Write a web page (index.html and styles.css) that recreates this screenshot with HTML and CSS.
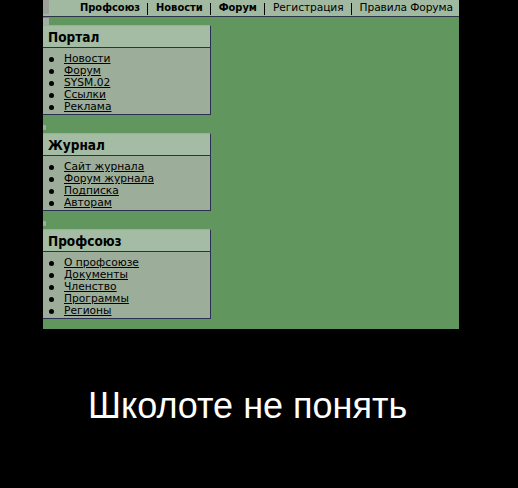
FILE: index.html
```html
<!DOCTYPE html>
<html>
<head>
<meta charset="utf-8">
<link rel="stylesheet" href="styles.css">
</head>
<body>
<div class="shot">
  <div class="topbar">
    <span class="corner"></span>
    <nav class="nav">
      <a class="nav-link bold">Профсоюз</a><span class="sep"></span>
      <a class="nav-link bold">Новости</a><span class="sep"></span>
      <a class="nav-link bold">Форум</a><span class="sep"></span>
      <a class="nav-link">Регистрация</a><span class="sep"></span>
      <a class="nav-link">Правила Форума</a>
    </nav>
  </div>
  <div class="sidebar">
    <div class="spacer first"><span class="dot big"></span></div>
    <div class="panel">
      <div class="panel-head">Портал</div>
      <ul class="panel-list">
        <li><a>Новости</a></li>
        <li><a>Форум</a></li>
        <li><a>SYSM.02</a></li>
        <li><a>Ссылки</a></li>
        <li><a>Реклама</a></li>
      </ul>
    </div>
    <div class="spacer"><span class="dot"></span></div>
    <div class="panel">
      <div class="panel-head">Журнал</div>
      <ul class="panel-list">
        <li><a>Сайт журнала</a></li>
        <li><a>Форум журнала</a></li>
        <li><a>Подписка</a></li>
        <li><a>Авторам</a></li>
      </ul>
    </div>
    <div class="spacer"><span class="dot"></span></div>
    <div class="panel">
      <div class="panel-head">Профсоюз</div>
      <ul class="panel-list">
        <li><a>О профсоюзе</a></li>
        <li><a>Документы</a></li>
        <li><a>Членство</a></li>
        <li><a>Программы</a></li>
        <li><a>Регионы</a></li>
      </ul>
    </div>
  </div>
</div>
<div class="caption">Школоте не понять</div>
</body>
</html>
```
FILE: styles.css
```css
html, body {
  margin: 0;
  padding: 0;
  background: #000;
}
body {
  width: 518px;
  height: 488px;
  overflow: hidden;
  font-family: "DejaVu Sans", Verdana, sans-serif;
}
.shot {
  margin-left: 43px;
  width: 416px;
  height: 329px;
  background: #62965f;
  overflow: hidden;
}
.topbar {
  height: 16px;
  background: #a0b9a0;
  border-bottom: 1px solid #2d3548;
  display: flex;
  align-items: flex-start;
  overflow: hidden;
}
.corner {
  flex: none;
  width: 6px;
  height: 14px;
  background: #9c9f9c;
}
.nav {
  display: flex;
  align-items: center;
  padding-left: 31px;
  height: 16px;
  white-space: nowrap;
  font-size: 10.7px;
  color: #000;
}
.nav-link {
  color: #000;
  text-decoration: none;
  line-height: 16px;
  letter-spacing: -0.1px;
}
.bold {
  font-family: "DejaVu Sans Condensed", "DejaVu Sans", sans-serif;
  font-size: 11px;
  font-weight: bold;
  letter-spacing: 0;
}
.sep {
  flex: none;
  width: 1px;
  height: 12px;
  background: #000;
  margin: 1px 8px 0 7px;
}
.sidebar {
  width: 168px;
}
.spacer {
  height: 18px;
  display: flex;
  align-items: flex-start;
  padding-top: 10px;
  box-sizing: border-box;
}
.spacer.first {
  height: 8px;
  padding-top: 1px;
}
.dot {
  width: 3px;
  height: 5px;
  background: #a4a8a4;
}
.dot.big {
  width: 6px;
  height: 7px;
  background: #a2aea2;
}
.panel {
  border-top: 1px solid #a3a7ad;
  border-right: 1px solid #2b3052;
  border-bottom: 1px solid #2b3052;
  background: #9cad9a;
}
.panel-head {
  height: 21px;
  background: #a3bca3;
  border-bottom: 1px solid #2b3052;
  padding-left: 5px;
  font-family: "DejaVu Sans Condensed", "DejaVu Sans", sans-serif;
  font-size: 13.5px;
  font-weight: bold;
  line-height: 22px;
  color: #000;
}
.panel-list {
  list-style: none;
  margin: 0;
  padding: 5px 0 1px 21px;
  font-size: 10.7px;
  line-height: 12px;
}
.panel-list li {
  position: relative;
  height: 12px;
}
.panel-list li::before {
  content: "";
  position: absolute;
  left: -15px;
  top: 4px;
  width: 5px;
  height: 5px;
  border-radius: 50%;
  background: #000;
}
.panel-list a {
  color: #000;
  text-decoration: underline;
}
.caption {
  padding: 56px 0 0 88px;
  font-family: "Liberation Sans", Arial, sans-serif;
  font-size: 36px;
  line-height: 42px;
  color: #fff;
  white-space: nowrap;
}
```
